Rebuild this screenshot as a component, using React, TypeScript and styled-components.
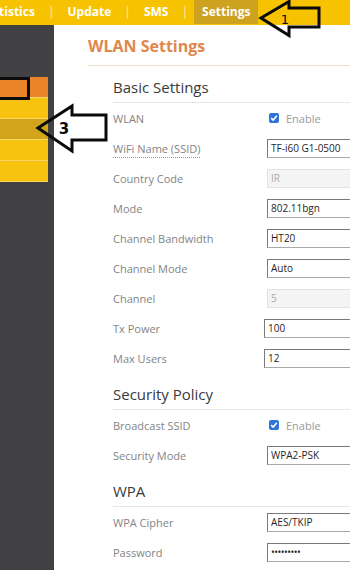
import React from "react";
import styled, { createGlobalStyle } from "styled-components";

const Global = createGlobalStyle`
  html, body { margin: 0; padding: 0; background: #fff; }
  body { font-family: "Open Sans", "DejaVu Sans", sans-serif; }
  * { box-sizing: border-box; }
`;

const Page = styled.div`
  position: relative;
  width: 350px;
  height: 570px;
  overflow: hidden;
  display: flex;
  flex-direction: column;
  background: #fff;
`;

const TopBar = styled.nav`
  flex: none;
  height: 25px;
  background: #f7c300;
  display: flex;
  align-items: flex-start;
  overflow: hidden;
`;

const NavList = styled.div`
  display: flex;
  align-items: flex-start;
  margin-left: -27px;
  white-space: nowrap;
`;

const NavItem = styled.span<{ $active?: boolean }>`
  height: ${(p) => (p.$active ? "24px" : "25px")};
  line-height: 24px;
  padding: 0 ${(p) => (p.$active ? 8 : 7)}px;
  color: #fff;
  font-size: 12px;
  font-weight: 700;
  background: ${(p) => (p.$active ? "#cda21f" : "transparent")};
`;

const NavSep = styled.span`
  line-height: 24px;
  margin: 0 6px;
  color: rgba(255, 255, 255, 0.7);
  font-size: 12px;
`;

const Body = styled.div`
  flex: 1;
  display: flex;
  min-height: 0;
`;

const Sidebar = styled.aside`
  flex: none;
  width: 54px;
  background: #414042;
  padding-top: 52px;
`;

const Menu = styled.div`
  width: 48px;
  display: flex;
  flex-direction: column;
`;

const MenuItem = styled.div<{ $tone: "orange" | "yellow" | "gold" }>`
  height: 21px;
  border-bottom: 1px solid #f8d666;
  background: ${(p) =>
    p.$tone === "orange" ? "#ea8429" : p.$tone === "gold" ? "#d1a41c" : "#f7c30e"};
`;

const Content = styled.main`
  flex: 1;
  min-width: 0;
  padding-left: 34px;
  overflow: hidden;
`;

const PageTitle = styled.h1`
  margin: 0;
  padding: 8px 0 6px;
  line-height: 26px;
  font-size: 16px;
  font-weight: 700;
  color: #e0874e;
  border-bottom: 1px solid #eadfc6;
  white-space: nowrap;
`;

const Section = styled.section`
  margin: 6px 0 0 25px;
`;

const SectionTitle = styled.h2`
  margin: 0;
  height: 31px;
  line-height: 30px;
  font-size: 15px;
  font-weight: 500;
  color: #3a3a3a;
  border-bottom: 1px solid #e6e6e6;
  white-space: nowrap;
`;

const Row = styled.div`
  height: 30px;
  display: flex;
  align-items: center;
  white-space: nowrap;
`;

const Label = styled.span<{ $hint?: boolean }>`
  flex: none;
  width: 154px;
  font-size: 11px;
  color: #848484;
  text-decoration: ${(p) => (p.$hint ? "underline dotted #9a9a9a" : "none")};
  text-underline-offset: 4px;
`;

const Field = styled.input<{ $shift?: number }>`
  flex: none;
  width: 120px;
  height: 19px;
  margin: 0 0 0 ${(p) => p.$shift ?? 0}px;
  padding: 0 3px;
  font-family: "Open Sans", "DejaVu Sans", sans-serif;
  font-size: 10px;
  color: #1f1f1f;
  background: #fff;
  border: 1px solid #a9a9a9;
  border-top-color: #7a7a7a;
  border-left-color: #7a7a7a;
  outline: none;
  &:disabled {
    color: #ababab;
    background: #f4f4f4;
    border-color: #e3e3e3;
  }
  &[type="password"] {
    font-size: 10px;
    letter-spacing: -0.5px;
  }
`;

const CheckWrap = styled.span`
  display: flex;
  align-items: center;
  margin-left: 2px;
  gap: 7px;
  font-size: 11px;
  color: #9a9a9a;
`;

const CheckBox = styled.span`
  width: 10px;
  height: 10px;
  border-radius: 2px;
  background: #2f74d8;
  display: flex;
  align-items: center;
  justify-content: center;
`;

const Overlay = styled.svg<{ $left: number; $top: number }>`
  position: absolute;
  left: ${(p) => p.$left}px;
  top: ${(p) => p.$top}px;
  overflow: visible;
`;

const Marker = styled.div`
  position: absolute;
  left: -3px;
  top: 77px;
  width: 33px;
  height: 23px;
  border: 3px solid #0c0c0c;
`;

const Check = () => (
  <CheckWrap>
    <CheckBox>
      <svg width="8" height="8" viewBox="0 0 7 7">
        <path d="M1 3.6 L2.8 5.3 L6 1.6" fill="none" stroke="#fff" strokeWidth="1.4" />
      </svg>
    </CheckBox>
    Enable
  </CheckWrap>
);

export default function App() {
  return (
    <>
      <Global />
      <Page>
        <TopBar>
          <NavList>
            <NavItem>Statistics</NavItem>
            <NavSep>|</NavSep>
            <NavItem>Update</NavItem>
            <NavSep>|</NavSep>
            <NavItem>SMS</NavItem>
            <NavSep>|</NavSep>
            <NavItem $active>Settings</NavItem>
          </NavList>
        </TopBar>
        <Body>
          <Sidebar>
            <Menu>
              <MenuItem $tone="orange" />
              <MenuItem $tone="yellow" />
              <MenuItem $tone="gold" />
              <MenuItem $tone="yellow" />
              <MenuItem $tone="yellow" />
            </Menu>
          </Sidebar>
          <Content>
            <PageTitle>WLAN Settings</PageTitle>
            <Section>
              <SectionTitle>Basic Settings</SectionTitle>
              <Row>
                <Label>WLAN</Label>
                <Check />
              </Row>
              <Row>
                <Label $hint>WiFi Name (SSID)</Label>
                <Field readOnly value="TF-i60 G1-0500" />
              </Row>
              <Row>
                <Label>Country Code</Label>
                <Field disabled value="IR" />
              </Row>
              <Row>
                <Label>Mode</Label>
                <Field readOnly value="802.11bgn" />
              </Row>
              <Row>
                <Label>Channel Bandwidth</Label>
                <Field readOnly value="HT20" />
              </Row>
              <Row>
                <Label>Channel Mode</Label>
                <Field readOnly value="Auto" />
              </Row>
              <Row>
                <Label>Channel</Label>
                <Field disabled value="5" />
              </Row>
              <Row>
                <Label>Tx Power</Label>
                <Field readOnly value="100" $shift={-3} />
              </Row>
              <Row>
                <Label>Max Users</Label>
                <Field readOnly value="12" $shift={-3} />
              </Row>
            </Section>
            <Section>
              <SectionTitle>Security Policy</SectionTitle>
              <Row>
                <Label>Broadcast SSID</Label>
                <Check />
              </Row>
              <Row>
                <Label>Security Mode</Label>
                <Field readOnly value="WPA2-PSK" />
              </Row>
            </Section>
            <Section>
              <SectionTitle>WPA</SectionTitle>
              <Row>
                <Label>WPA Cipher</Label>
                <Field readOnly value="AES/TKIP" />
              </Row>
              <Row>
                <Label>Password</Label>
                <Field type="password" readOnly value="123456789" />
              </Row>
            </Section>
          </Content>
        </Body>

        <Marker />
        <Overlay $left={256} $top={0} width="68" height="40" viewBox="0 0 68 40">
          <polygon
            points="5,18 33,1.5 33,8 63,8 63,27 33,27 33,35.5"
            fill="none"
            stroke="#0a0a0a"
            strokeWidth="3"
            strokeLinejoin="miter"
          />
          <text x="29" y="24" fontSize="13" fontFamily="DejaVu Sans, sans-serif" textAnchor="middle" fill="#0a0a0a">
            1
          </text>
        </Overlay>
        <Overlay $left={34} $top={103} width="76" height="52" viewBox="0 0 76 52">
          <polygon
            points="4,25 38,3 38,12 72,12 72,37 38,37 38,48"
            fill="none"
            stroke="#0a0a0a"
            strokeWidth="3"
            strokeLinejoin="miter"
          />
          <text x="30" y="31" fontSize="15" fontWeight="700" fontFamily="DejaVu Sans, sans-serif" textAnchor="middle" fill="#0a0a0a">
            3
          </text>
        </Overlay>
      </Page>
    </>
  );
}
